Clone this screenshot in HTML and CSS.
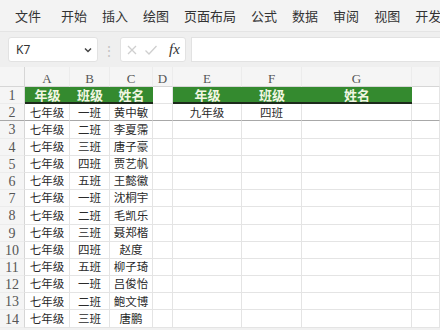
FILE: index.html
```html
<!DOCTYPE html>
<html lang="zh">
<head>
<meta charset="utf-8">
<link rel="stylesheet" href="styles.css">
</head>
<body>
<div class="menu">
  <span class="mi first">文件</span><span class="mi">开始</span><span class="mi">插入</span><span class="mi">绘图</span><span class="mi">页面布局</span><span class="mi">公式</span><span class="mi">数据</span><span class="mi">审阅</span><span class="mi">视图</span><span class="mi">开发工具</span>
</div>
<div class="fbar">
  <div class="namebox"><span>K7</span>
    <svg class="chev" width="8" height="6" viewBox="0 0 8 6"><path d="M1 1.5 L4 4.5 L7 1.5" fill="none" stroke="#444" stroke-width="1.5"/></svg>
  </div>
  <div class="dots">⋮</div>
  <div class="fxbox">
    <svg width="12" height="12" viewBox="0 0 12 12"><path d="M2 2 L10 10 M10 2 L2 10" stroke="#cfcfcf" stroke-width="1.3"/></svg>
    <svg width="14" height="12" viewBox="0 0 14 12"><path d="M1.5 6.5 L5 10 L12.5 2" fill="none" stroke="#cfcfcf" stroke-width="1.3"/></svg>
    <span class="fx">fx</span>
  </div>
  <div class="finput"></div>
</div>
<div class="sheet">
  <div class="corner"></div><div class="ch">A</div><div class="ch">B</div><div class="ch">C</div><div class="ch">D</div><div class="ch">E</div><div class="ch">F</div><div class="ch">G</div><div class="ch"></div>

  <div class="rh">1</div><div class="c hd">年级</div><div class="c hd">班级</div><div class="c hd">姓名</div><div class="c"></div><div class="c hd">年级</div><div class="c hd">班级</div><div class="c hd">姓名</div><div class="c"></div>

  <div class="rh r2">2</div><div class="c r2">七年级</div><div class="c r2">一班</div><div class="c r2">黄中敏</div><div class="c r2"></div><div class="c r2">九年级</div><div class="c r2">四班</div><div class="c r2"></div><div class="c r2"></div>

  <div class="rh">3</div><div class="c">七年级</div><div class="c">二班</div><div class="c">李夏霈</div><div class="c"></div><div class="c"></div><div class="c"></div><div class="c"></div><div class="c"></div>
  <div class="rh">4</div><div class="c">七年级</div><div class="c">三班</div><div class="c">唐子豪</div><div class="c"></div><div class="c"></div><div class="c"></div><div class="c"></div><div class="c"></div>
  <div class="rh">5</div><div class="c">七年级</div><div class="c">四班</div><div class="c">贾艺帆</div><div class="c"></div><div class="c"></div><div class="c"></div><div class="c"></div><div class="c"></div>
  <div class="rh">6</div><div class="c">七年级</div><div class="c">五班</div><div class="c">王懿徽</div><div class="c"></div><div class="c"></div><div class="c"></div><div class="c"></div><div class="c"></div>
  <div class="rh">7</div><div class="c">七年级</div><div class="c">一班</div><div class="c">沈桐宇</div><div class="c"></div><div class="c"></div><div class="c"></div><div class="c"></div><div class="c"></div>
  <div class="rh">8</div><div class="c">七年级</div><div class="c">二班</div><div class="c">毛凯乐</div><div class="c"></div><div class="c"></div><div class="c"></div><div class="c"></div><div class="c"></div>
  <div class="rh">9</div><div class="c">七年级</div><div class="c">三班</div><div class="c">聂郑楷</div><div class="c"></div><div class="c"></div><div class="c"></div><div class="c"></div><div class="c"></div>
  <div class="rh">10</div><div class="c">七年级</div><div class="c">四班</div><div class="c">赵度</div><div class="c"></div><div class="c"></div><div class="c"></div><div class="c"></div><div class="c"></div>
  <div class="rh">11</div><div class="c">七年级</div><div class="c">五班</div><div class="c">柳子琦</div><div class="c"></div><div class="c"></div><div class="c"></div><div class="c"></div><div class="c"></div>
  <div class="rh">12</div><div class="c">七年级</div><div class="c">一班</div><div class="c">吕俊怡</div><div class="c"></div><div class="c"></div><div class="c"></div><div class="c"></div><div class="c"></div>
  <div class="rh">13</div><div class="c">七年级</div><div class="c">二班</div><div class="c">鲍文博</div><div class="c"></div><div class="c"></div><div class="c"></div><div class="c"></div><div class="c"></div>
  <div class="rh">14</div><div class="c">七年级</div><div class="c">三班</div><div class="c">唐鹏</div><div class="c"></div><div class="c"></div><div class="c"></div><div class="c"></div><div class="c"></div>
</div>
</body>
</html>
```

FILE: styles.css
```css
* { box-sizing: border-box; }
html, body { margin: 0; padding: 0; }
body {
  width: 440px;
  height: 330px;
  overflow: hidden;
  background: #f1f1f1;
  font-family: "Noto Sans CJK SC", "Noto Sans", sans-serif;
  color: #222;
}
.menu {
  height: 32px;
  display: flex;
  align-items: center;
  gap: 15px;
  padding-left: 15px;
  white-space: nowrap;
  overflow: hidden;
  font-size: 13px;
  color: #333;
  background: #f3f3f3;
  border-bottom: 1px solid #e4e4e4;
}
.mi.first { margin-right: 5px; }
.fbar {
  height: 35px;
  display: flex;
  align-items: center;
  padding: 0 0 0 8px;
  background: #efefef;
}
.namebox {
  width: 90px;
  height: 25px;
  background: #fff;
  border: 1px solid #e2e2e2;
  border-radius: 3px;
  display: flex;
  align-items: center;
  justify-content: space-between;
  padding: 0 5px 0 7px;
  font-size: 12px;
  font-family: "Noto Sans", sans-serif;
  color: #333;
}
.dots {
  width: 22px;
  text-align: center;
  color: #c4c4c4;
  font-size: 14px;
}
.fxbox {
  width: 66px;
  height: 25px;
  background: #fff;
  border: 1px solid #e2e2e2;
  border-radius: 3px;
  display: flex;
  align-items: center;
  gap: 6px;
  padding-left: 5px;
}
.fx {
  font-family: "Liberation Serif", serif;
  font-style: italic;
  font-size: 15px;
  color: #333;
  margin-left: 5px;
}
.finput {
  flex: 1;
  height: 25px;
  margin-left: 5px;
  background: #fff;
  border-top: 1px solid #e2e2e2;
  border-bottom: 1px solid #e2e2e2;
  border-left: 1px solid #e2e2e2;
}
.sheet {
  display: grid;
  grid-template-columns: 25px 45px 40px 43px 20px 69px 60px 110px 28px;
  grid-template-rows: 20px repeat(14, 17.2px);
  background: #fff;
}
.corner, .ch, .rh {
  background: #f5f5f5;
  color: #555;
  font-family: "Liberation Serif", serif;
  display: flex;
  align-items: center;
  justify-content: center;
  line-height: 1;
}
.corner { border-right: 1px solid #d6d6d6; border-bottom: 1px solid #d6d6d6; }
.ch {
  font-size: 13px;
  border-bottom: 1px solid #d6d6d6;
  border-right: 1px solid #ececec;
  padding-top: 3px;
}
.rh {
  font-size: 14px;
  border-right: 1px solid #d6d6d6;
  border-bottom: 1px solid #ececec;
  padding-top: 2px;
}
.c {
  font-size: 11.5px;
  line-height: 1;
  color: #2a2a2a;
  display: flex;
  align-items: center;
  justify-content: center;
  border-right: 1px solid #e4e4e4;
  border-bottom: 1px solid #e4e4e4;
  white-space: nowrap;
}
.c.hd {
  background: #348a2f;
  color: #f1f6e2;
  font-weight: 700;
  font-size: 13px;
  border-right: none;
  border-bottom: 2px solid #1d2a1b;
}
.r2 { border-bottom: 1px solid #a8a8a8; }
```
